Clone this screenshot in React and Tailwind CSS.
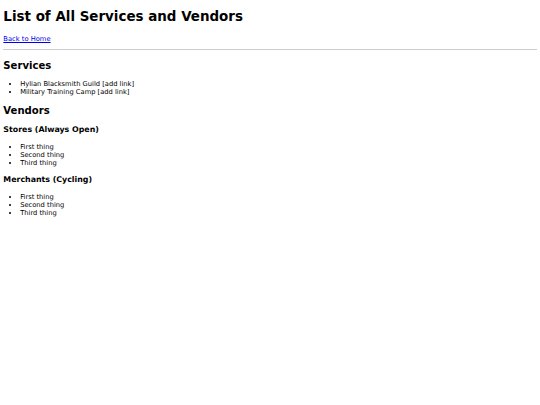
import React from "react";

function App() {
  return (
    <div className="min-h-screen bg-white px-[3.36px] pt-px font-['DejaVu_Sans',sans-serif] text-[6.72px] leading-[normal] text-black">
      <h1 className="mt-[8px] mb-[11px] text-[13.44px] font-bold">List of All Services and Vendors</h1>
      <p className="mt-[6.72px] mb-[5.7px]">
        <a href="#" className="text-[#0000ee] underline">
          Back to Home
        </a>
      </p>
      <hr className="mt-[3.36px] mb-[4px] border-t border-[#cccccc]" />
      <h2 className="mt-[10.5px] mb-[8.5px] text-[10.08px] font-bold">Services</h2>
      <ul className="mt-[6.72px] mb-[9.2px] list-disc pl-[16.8px]">
        <li>Hylian Blacksmith Guild [add link]</li>
        <li>Military Training Camp [add link]</li>
      </ul>
      <h2 className="mt-[8.37px] mb-[9.4px] text-[10.08px] font-bold">Vendors</h2>
      <h3 className="mt-[7.86px] mb-[8.86px] text-[7.86px] font-bold">Stores (Always Open)</h3>
      <ul className="my-[6.72px] list-disc pl-[16.8px]">
        <li>First thing</li>
        <li>Second thing</li>
        <li>Third thing</li>
      </ul>
      <h3 className="mt-[7.9px] mb-[8.6px] text-[7.86px] font-bold">Merchants (Cycling)</h3>
      <ul className="my-[6.72px] list-disc pl-[16.8px]">
        <li>First thing</li>
        <li>Second thing</li>
        <li>Third thing</li>
      </ul>
    </div>
  );
}

export default App;
